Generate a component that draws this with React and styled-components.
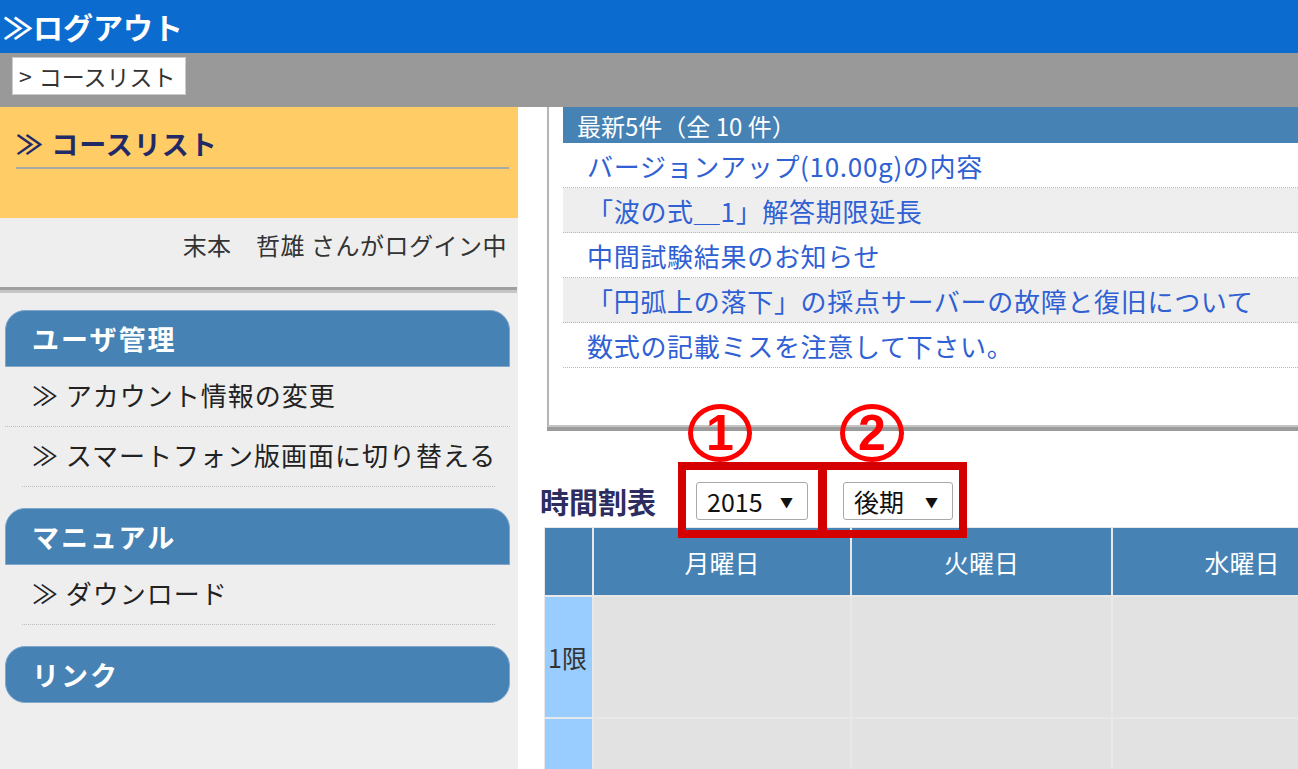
import styled, { createGlobalStyle } from 'styled-components';

const GlobalStyle = createGlobalStyle`
  html, body {
    margin: 0;
    padding: 0;
    overflow: hidden;
  }
  body {
    width: 1298px;
    height: 769px;
    background: #fff;
    font-family: "Noto Sans CJK JP", "Noto Sans", sans-serif;
  }
`;

const Page = styled.div`
  width: 1298px;
  height: 769px;
  overflow: hidden;
  display: flex;
  flex-direction: column;
`;

const TopBar = styled.header`
  height: 53px;
  flex: none;
  box-sizing: border-box;
  background: #0b6bcf;
  color: #fff;
  font-size: 30px;
  font-weight: 700;
  line-height: 1;
  display: flex;
  align-items: center;
  padding: 0 0 2px 3px;
`;

const CrumbBar = styled.nav`
  height: 54px;
  flex: none;
  box-sizing: border-box;
  background: #999;
  padding: 4px 0 0 12px;
`;

const Crumb = styled.span`
  display: inline-flex;
  align-items: center;
  height: 38px;
  box-sizing: border-box;
  background: #fff;
  border: 1px solid #ccc;
  padding: 0 9px 0 6px;
  font-size: 23px;
  color: #333;
  gap: 7px;
`;

const Body = styled.div`
  flex: 1;
  min-height: 0;
  display: grid;
  grid-template-columns: 518px 780px;
`;

const Sidebar = styled.aside`
  background: #eee;
  display: flex;
  flex-direction: column;
`;

const CurrentBlock = styled.div`
  height: 111px;
  box-sizing: border-box;
  background: #ffcc66;
  padding: 20px 9px 0 16px;
`;

const CurrentTitle = styled.h2`
  margin: 0;
  font-size: 27px;
  letter-spacing: 1px;
  line-height: 34px;
  font-weight: 700;
  color: #1f2a66;
  padding-bottom: 6px;
  border-bottom: 2px solid #a8a8a8;
`;

const UserInfo = styled.div`
  height: 69px;
  box-sizing: border-box;
  padding: 10px 11px 0 0;
  text-align: right;
  font-size: 24px;
  letter-spacing: 0.5px;
  line-height: 34px;
  color: #333;
`;

const Divider = styled.div`
  height: 3px;
  background: #a0a0a0;
  border-bottom: 3px solid #c6c6c6;
  margin-right: 1px;
`;

const Nav = styled.div`
  padding-top: 17px;
`;

const Section = styled.section`
  margin-bottom: 21px;
`;

const SectionHead = styled.h3`
  margin: 0 8px 0 5px;
  height: 57px;
  box-sizing: border-box;
  background: #4682b4;
  border: 1px solid #7fa7cc;
  border-radius: ${(p) => (p.$round ? '20px' : '20px 20px 0 0')};
  color: #fff;
  font-size: 27px;
  letter-spacing: 2px;
  font-weight: 700;
  display: flex;
  align-items: center;
  padding-left: 26px;
`;

const NavItem = styled.div`
  height: 60px;
  box-sizing: border-box;
  margin: ${(p) => (p.$wide ? '0 8px 0 5px' : '0 23px 0 22px')};
  padding: 0 0 5px ${(p) => (p.$wide ? '27px' : '10px')};
  border-bottom: 1px dotted #bcbcbc;
  display: flex;
  align-items: center;
  font-size: 26px;
  letter-spacing: 1px;
  color: #222;
  white-space: nowrap;
`;

const Content = styled.main`
  background: #fff;
  padding-left: 22px;
  overflow: hidden;
  min-width: 0;
`;

const NewsBox = styled.section`
  margin: 0 0 4px 7px;
  border-left: 2px solid #b5b5b5;
  border-bottom: 2px solid #c4c4c4;
  box-shadow: 0 4px 0 #9c9c9c;
  padding: 0 0 57px 14px;
`;

const NewsHead = styled.div`
  height: 36px;
  background: #4682b4;
  color: #fff;
  font-size: 24px;
  display: flex;
  align-items: center;
  padding-left: 14px;
`;

const NewsItem = styled.div`
  height: 45px;
  box-sizing: border-box;
  border-bottom: 1px dotted #b8b8b8;
  background: ${(p) => (p.$alt ? '#eee' : '#fff')};
  color: #2f60d4;
  font-size: 26px;
  letter-spacing: 0.7px;
  display: flex;
  align-items: center;
  padding-left: 24px;
  white-space: nowrap;
`;

const TableHead = styled.div`
  position: relative;
  height: 96px;
  box-sizing: border-box;
  display: flex;
  align-items: flex-end;
  padding-bottom: 7px;
`;

const TableTitle = styled.h2`
  margin: 0;
  font-size: 29px;
  line-height: 38px;
  font-weight: 700;
  color: #2d2d5f;
`;

const Select = styled.div`
  width: ${(p) => p.$w}px;
  height: 38px;
  box-sizing: border-box;
  margin-left: ${(p) => p.$ml}px;
  border: 1px solid #a9a9a9;
  border-radius: 3px;
  background: #fff;
  display: flex;
  align-items: center;
  justify-content: space-between;
  padding: 0 14px 0 10px;
  font-size: 25px;
  color: #111;
`;

const Arrow = styled.span`
  font-size: 13px;
  color: #111;
`;

const Frame = styled.div`
  position: absolute;
  z-index: 2;
  top: 31px;
  left: ${(p) => p.$left}px;
  width: 149px;
  height: 76px;
  box-sizing: border-box;
  border: 8px solid #d40000;
  pointer-events: none;
`;

const Marker = styled.div`
  position: absolute;
  z-index: 2;
  top: -27px;
  left: ${(p) => p.$left}px;
  width: 64px;
  height: 58px;
  box-sizing: border-box;
  border: 5px solid #f00;
  border-radius: 50%;
  display: flex;
  align-items: center;
  justify-content: center;
  color: #f00;
  font-family: "Liberation Sans", Arial, sans-serif;
  font-size: 50px;
  font-weight: 700;
  line-height: 1;
`;

const Grid = styled.div`
  margin-left: 4px;
  display: grid;
  grid-template-columns: 47px 256px 259px 258px 258px;
  grid-template-rows: 67px 120px 120px;
  gap: 2px;
  padding: 1px;
  background: #e8e8e8;
  width: max-content;
`;

const HeadCell = styled.div`
  background: #4682b4;
  color: #fff;
  font-size: 25px;
  display: flex;
  align-items: center;
  justify-content: center;
`;

const PeriodCell = styled.div`
  background: #99ccff;
  color: #333;
  font-size: 25px;
  display: flex;
  align-items: center;
  padding-left: 3px;
`;

const Cell = styled.div`
  background: #e2e2e2;
`;

const news = [
  'バージョンアップ(10.00g)の内容',
  '「波の式＿1」解答期限延長',
  '中間試験結果のお知らせ',
  '「円弧上の落下」の採点サーバーの故障と復旧について',
  '数式の記載ミスを注意して下さい。',
];

const days = ['月曜日', '火曜日', '水曜日', '木曜日'];

export default function App() {
  return (
    <Page>
      <GlobalStyle />
      <TopBar>≫ログアウト</TopBar>
      <CrumbBar>
        <Crumb>
          <span>&gt;</span>
          <span>コースリスト</span>
        </Crumb>
      </CrumbBar>
      <Body>
        <Sidebar>
          <CurrentBlock>
            <CurrentTitle>≫ コースリスト</CurrentTitle>
          </CurrentBlock>
          <UserInfo>末本　哲雄 さんがログイン中</UserInfo>
          <Divider />
          <Nav>
            <Section>
              <SectionHead>ユーザ管理</SectionHead>
              <NavItem $wide>≫ アカウント情報の変更</NavItem>
              <NavItem>≫ スマートフォン版画面に切り替える</NavItem>
            </Section>
            <Section>
              <SectionHead>マニュアル</SectionHead>
              <NavItem>≫ ダウンロード</NavItem>
            </Section>
            <Section>
              <SectionHead $round>リンク</SectionHead>
            </Section>
          </Nav>
        </Sidebar>
        <Content>
          <NewsBox>
            <NewsHead>最新5件（全 10 件）</NewsHead>
            {news.map((n, i) => (
              <NewsItem key={n} $alt={i % 2 === 1}>{n}</NewsItem>
            ))}
          </NewsBox>
          <TableHead>
            <TableTitle>時間割表</TableTitle>
            <Select $w={112} $ml={40}>
              <span>2015</span>
              <Arrow>▼</Arrow>
            </Select>
            <Select $w={110} $ml={35}>
              <span>後期</span>
              <Arrow>▼</Arrow>
            </Select>
            <Marker $left={148}>1</Marker>
            <Marker $left={300}>2</Marker>
            <Frame $left={138} />
            <Frame $left={278} />
          </TableHead>
          <Grid>
            <HeadCell />
            {days.map((d) => (
              <HeadCell key={d}>{d}</HeadCell>
            ))}
            <PeriodCell>1限</PeriodCell>
            {days.map((d) => (
              <Cell key={d} />
            ))}
            <PeriodCell>2限</PeriodCell>
            {days.map((d) => (
              <Cell key={d} />
            ))}
          </Grid>
        </Content>
      </Body>
    </Page>
  );
}
